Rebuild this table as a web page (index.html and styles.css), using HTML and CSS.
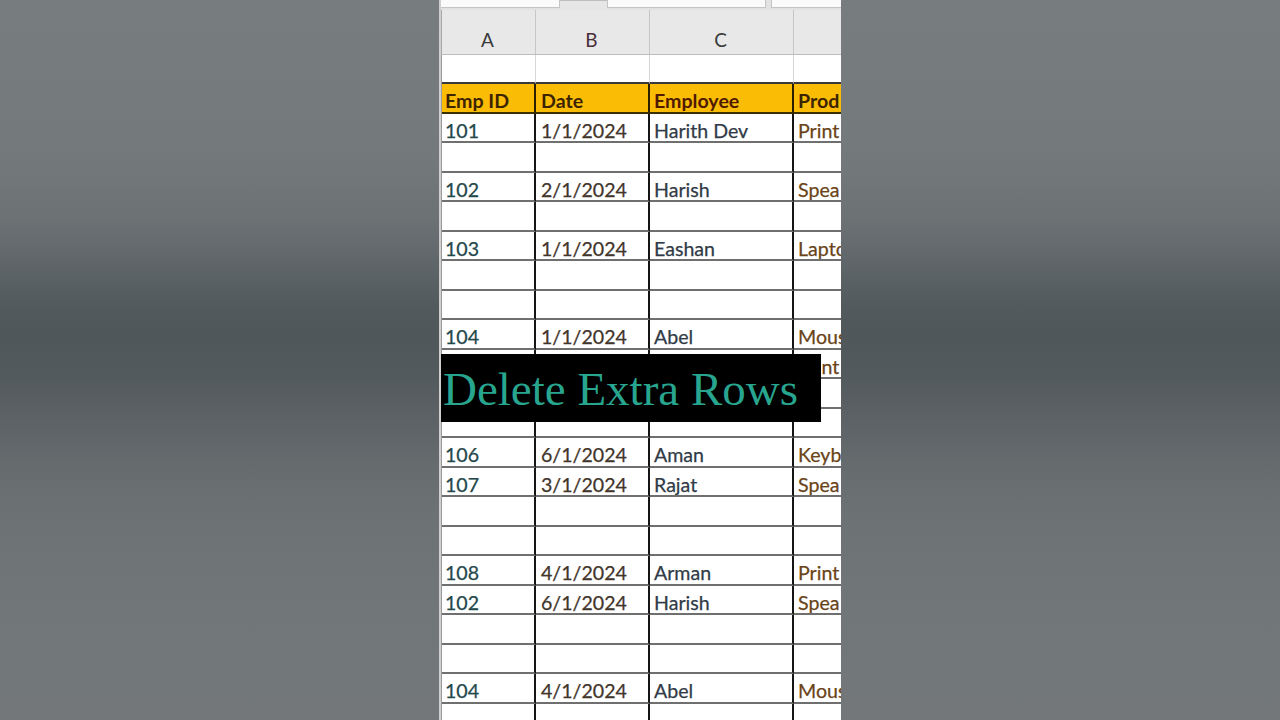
FILE: index.html
```html
<!DOCTYPE html>
<html lang="en">
<head>
<meta charset="utf-8">
<title>Delete Extra Rows</title>
<link rel="stylesheet" href="styles.css">
</head>
<body>
<main class="stage">
  <section class="sheet">
    <div class="ribbon">
      <div class="box box-a"></div>
      <div class="tab"></div>
      <div class="box box-b"></div>
      <div class="box box-c"></div>
    </div>
    <div class="colheads">
      <div class="ch">A</div>
      <div class="ch">B</div>
      <div class="ch">C</div>
      <div class="ch ch-d"></div>
    </div>
    <div class="grid">
      <div class="row blank-top"><div class="c a"></div><div class="c b"></div><div class="c n"></div><div class="c d"></div></div>
      <div class="row head"><div class="c a">Emp ID</div><div class="c b">Date</div><div class="c n">Employee</div><div class="c d">Prod</div></div>
      <div class="row"><div class="c a">101</div><div class="c b">1/1/2024</div><div class="c n">Harith Dev</div><div class="c d">Print</div></div>
      <div class="row"><div class="c a"></div><div class="c b"></div><div class="c n"></div><div class="c d"></div></div>
      <div class="row"><div class="c a">102</div><div class="c b">2/1/2024</div><div class="c n">Harish</div><div class="c d">Spea</div></div>
      <div class="row"><div class="c a"></div><div class="c b"></div><div class="c n"></div><div class="c d"></div></div>
      <div class="row"><div class="c a">103</div><div class="c b">1/1/2024</div><div class="c n">Eashan</div><div class="c d">Lapto</div></div>
      <div class="row"><div class="c a"></div><div class="c b"></div><div class="c n"></div><div class="c d"></div></div>
      <div class="row"><div class="c a"></div><div class="c b"></div><div class="c n"></div><div class="c d"></div></div>
      <div class="row"><div class="c a">104</div><div class="c b">1/1/2024</div><div class="c n">Abel</div><div class="c d">Mous</div></div>
      <div class="row"><div class="c a"></div><div class="c b"></div><div class="c n"></div><div class="c d">Print</div></div>
      <div class="row"><div class="c a"></div><div class="c b"></div><div class="c n"></div><div class="c d"></div></div>
      <div class="row"><div class="c a"></div><div class="c b"></div><div class="c n"></div><div class="c d"></div></div>
      <div class="row"><div class="c a">106</div><div class="c b">6/1/2024</div><div class="c n">Aman</div><div class="c d">Keyb</div></div>
      <div class="row"><div class="c a">107</div><div class="c b">3/1/2024</div><div class="c n">Rajat</div><div class="c d">Spea</div></div>
      <div class="row"><div class="c a"></div><div class="c b"></div><div class="c n"></div><div class="c d"></div></div>
      <div class="row"><div class="c a"></div><div class="c b"></div><div class="c n"></div><div class="c d"></div></div>
      <div class="row"><div class="c a">108</div><div class="c b">4/1/2024</div><div class="c n">Arman</div><div class="c d">Print</div></div>
      <div class="row"><div class="c a">102</div><div class="c b">6/1/2024</div><div class="c n">Harish</div><div class="c d">Spea</div></div>
      <div class="row"><div class="c a"></div><div class="c b"></div><div class="c n"></div><div class="c d"></div></div>
      <div class="row"><div class="c a"></div><div class="c b"></div><div class="c n"></div><div class="c d"></div></div>
      <div class="row"><div class="c a">104</div><div class="c b">4/1/2024</div><div class="c n">Abel</div><div class="c d">Mous</div></div>
      <div class="row"><div class="c a"></div><div class="c b"></div><div class="c n"></div><div class="c d"></div></div>
    </div>
    <div class="caption">Delete Extra Rows</div>
  </section>
</main>
</body>
</html>
```

FILE: styles.css
```css
* { box-sizing: border-box; }
html, body { margin: 0; padding: 0; }
body {
  width: 1280px;
  height: 720px;
  overflow: hidden;
  background: linear-gradient(to bottom,
    #777c7f 0px,
    #74797c 150px,
    #6c7174 220px,
    #5d6467 270px,
    #525a5d 305px,
    #4f575a 335px,
    #535a5d 375px,
    #5c6265 420px,
    #666b6e 465px,
    #6d7275 520px,
    #717679 620px,
    #73777a 720px);
  font-family: Lato, "Open Sans", sans-serif;
}
.stage {
  height: 720px;
  display: flex;
  justify-content: center;
}
.sheet {
  position: relative;
  width: 402px;
  height: 720px;
  background: #ffffff;
  overflow: hidden;
  border-left: 2px solid #cfcfcf;
  display: flex;
  flex-direction: column;
}
.ribbon {
  height: 10px;
  flex: none;
  background: #e2e2e2;
  display: flex;
  align-items: stretch;
}
.box {
  background: #fafafa;
  border-bottom: 1px solid #c4c4c4;
  height: 8px;
}
.box-a { width: 119px; border-right: 1px solid #c4c4c4; }
.tab { width: 47px; background: #e6e6e6; border-top: 1px solid #bdbdbd; }
.box-b { width: 160px; border-left: 1px solid #c4c4c4; border-right: 1px solid #c4c4c4; }
.box-c { width: 70px; margin-left: 5px; border-left: 1px solid #c4c4c4; }

.colheads {
  height: 44.5px;
  flex: none;
  display: grid;
  grid-template-columns: 94px 114px 144px 60px;
  background: #e8e8e8;
  border-bottom: 1px solid #bdbdbd;
  border-left: 1px solid #a9a9a9;
}
.ch {
  display: flex;
  align-items: flex-end;
  justify-content: center;
  padding-bottom: 3px;
  font-size: 19px;
  color: #3a3a3a;
  border-right: 1px solid #c6c6c6;
  padding-right: 2px;
}
.ch:nth-child(2) { color: #4a2e3a; }
.ch-d { border-right: none; }

.grid {
  display: flex;
  flex-direction: column;
  border-left: 1px solid #9a9a9a;
}
.row {
  display: grid;
  grid-template-columns: 94px 114px 144px 60px;
  height: 29.52px;
  flex: none;
}
.c {
  border-right: 2px solid #151515;
  border-bottom: 2px solid #6f6f6f;
  font-size: 19.6px;
  line-height: 1;
  padding: 7px 0 0 4px;
  white-space: nowrap;
  overflow: hidden;
  -webkit-text-stroke: 0.25px currentColor;
}
.c.a { color: #24484a; padding-left: 3px; }
.c.b { color: #42352b; padding-left: 5px; }
.c.n { color: #313b47; }
.c.d { color: #6a4418; }

.blank-top .c {
  border-right: 1px solid #d6d6d6;
  border-bottom: 2px solid #3a3a3a;
}
.head .c {
  background: #fbbc05;
  font-weight: 700;
  color: #3d2400;
  border-right: 2px solid #2a2000;
  border-bottom: 2px solid #3a3000;
  -webkit-text-stroke: 0;
}
.head .c.n { color: #4f1a00; }

.caption {
  position: absolute;
  left: -2px;
  top: 354px;
  width: 382px;
  height: 68px;
  background: #000000;
  color: #28a58f;
  font-family: "Liberation Serif", "DejaVu Serif", serif;
  font-size: 47px;
  line-height: 70px;
  padding-left: 4px;
  white-space: nowrap;
}
```
